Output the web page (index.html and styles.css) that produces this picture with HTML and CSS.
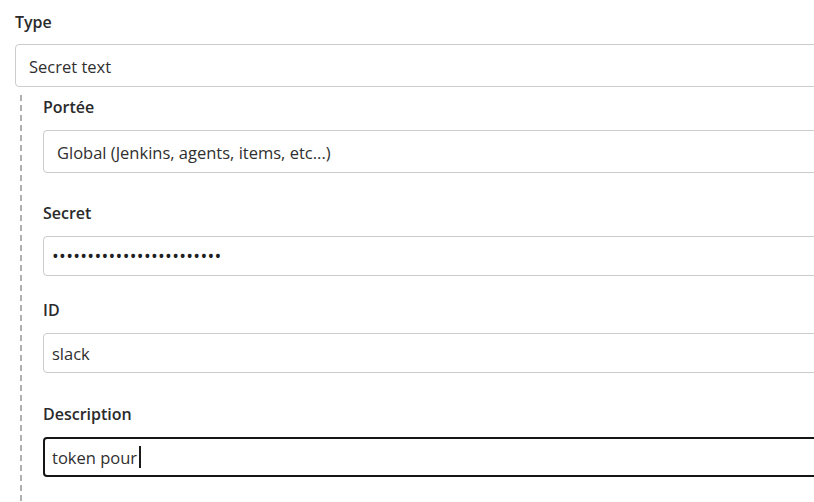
FILE: index.html
```html
<!DOCTYPE html>
<html lang="fr">
<head>
<meta charset="utf-8">
<title>Credentials</title>
<link rel="stylesheet" href="styles.css">
</head>
<body>
<form class="form">
  <div class="field field-type">
    <div class="label label-type">Type</div>
    <div class="control select">Secret text</div>
  </div>
  <div class="nested">
    <div class="field field-scope">
      <div class="label">Portée</div>
      <div class="control select">Global (Jenkins, agents, items, etc...)</div>
    </div>
    <div class="field field-secret">
      <div class="label">Secret</div>
      <div class="control input password">••••••••••••••••••••••••</div>
    </div>
    <div class="field field-id">
      <div class="label">ID</div>
      <div class="control input">slack</div>
    </div>
    <div class="field field-desc">
      <div class="label">Description</div>
      <div class="control input focused">token pour<span class="caret"></span></div>
    </div>
  </div>
</form>
</body>
</html>
```
FILE: styles.css
```css
html, body {
  margin: 0;
  padding: 0;
  background: #fff;
  overflow: hidden;
}
body {
  font-family: "Open Sans", "Noto Sans", sans-serif;
  font-size: 16.5px;
  color: #333;
}
.form {
  padding: 11px 0 0 15px;
  margin-right: -40px;
}
.label {
  font-weight: 600;
  font-size: 16px;
  line-height: 22px;
  color: #2a2a2a;
  margin-bottom: 12px;
}
.label-type {
  margin-bottom: 11px;
}
.control {
  box-sizing: border-box;
  display: flex;
  align-items: center;
  border: 1px solid #ccc;
  border-radius: 4px;
  background: #fff;
  white-space: nowrap;
  font-size: 16.5px;
  color: #2f2f2f;
}
.select {
  height: 43px;
  padding-left: 13px;
  padding-top: 1px;
}
.input {
  height: 40px;
  padding-left: 8px;
}
.password {
  padding-left: 8px;
  letter-spacing: 0.3px;
  font-size: 18px;
  color: #1f1f1f;
}
.focused {
  border: 2px solid #151515;
  padding-left: 7px;
}
.caret {
  display: inline-block;
  width: 2px;
  height: 22px;
  background: #1a1a1a;
  margin-left: 2px;
}
.nested {
  margin: 8px 0 0 5px;
  padding: 1px 0 0 23px;
  background-image: linear-gradient(to bottom, #b0b0b0 60%, transparent 60%);
  background-size: 2px 10px;
  background-repeat: repeat-y;
  background-position: 0 0;
  padding-bottom: 40px;
}
.field-scope { margin-bottom: 29px; }
.field-secret { margin-bottom: 23px; }
.field-id { margin-bottom: 30px; }
```
